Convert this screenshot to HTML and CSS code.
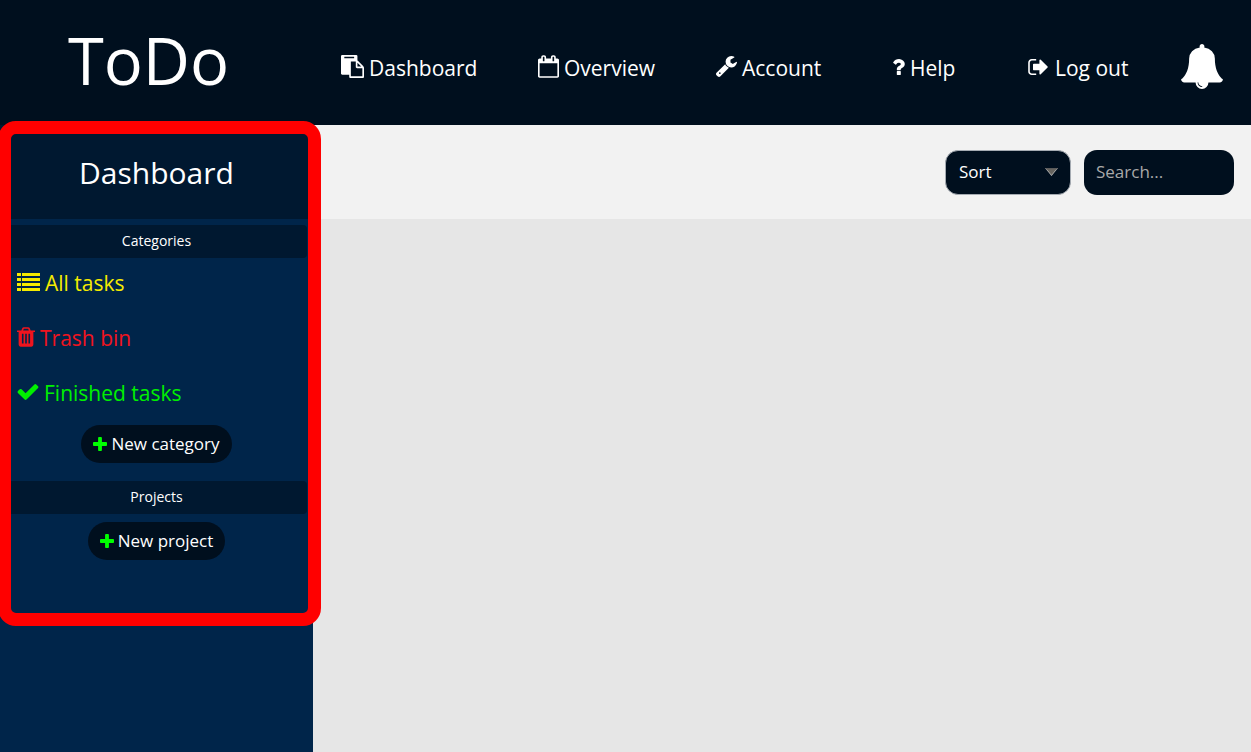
FILE: index.html
```html
<!DOCTYPE html>
<html lang="en">
<head>
<meta charset="utf-8">
<title>ToDo</title>
<link rel="stylesheet" href="styles.css">
</head>
<body>
<div class="app">
  <header class="topbar">
    <div class="logo">ToDo</div>
    <nav class="nav">
      <a class="nav-link" href="#"><svg class="icon-paste" viewBox="0 0 1792 1792"><path d="M768 1664h896v-640h-416q-40 0-68-28t-28-68v-416h-384v1152zm256-1440v-64q0-13-9.500-22.500t-22.500-9.500h-704q-13 0-22.500 9.500t-9.500 22.500v64q0 13 9.500 22.500t22.500 9.500h704q13 0 22.500-9.500t9.500-22.500zm256 672h299l-299-299v299zm512 128v672q0 40-28 68t-68 28h-960q-40 0-68-28t-28-68v-160h-544q-40 0-68-28t-28-68v-1344q0-40 28-68t68-28h1088q40 0 68 28t28 68v328q21 13 36 28l408 408q28 28 48 76t20 88z"/></svg><span>Dashboard</span></a>
      <a class="nav-link" href="#"><svg class="icon-calendar" viewBox="0 0 1664 1792"><path d="M128 1664h1408v-1024h-1408v1024zm384-1216v-288q0-14-9-23t-23-9h-64q-14 0-23 9t-9 23v288q0 14 9 23t23 9h64q14 0 23-9t9-23zm768 0v-288q0-14-9-23t-23-9h-64q-14 0-23 9t-9 23v288q0 14 9 23t23 9h64q14 0 23-9t9-23zm384-64v1280q0 52-38 90t-90 38h-1408q-52 0-90-38t-38-90v-1280q0-52 38-90t90-38h128v-96q0-66 47-113t113-47h64q66 0 113 47t47 113v96h384v-96q0-66 47-113t113-47h64q66 0 113 47t47 113v96h128q52 0 90 38t38 90z"/></svg><span>Overview</span></a>
      <a class="nav-link" href="#"><svg class="icon-wrench" viewBox="85 128 1641 1643"><path d="M448 1472q0-26-19-45t-45-19-45 19-19 45 19 45 45 19 45-19 19-45zm644-420l-682 682q-37 37-90 37-52 0-91-37l-106-108q-38-36-38-90 0-53 38-91l681-681q39 98 114.500 173.500t173.500 114.500zm634-435q0 39-23 106-47 134-164.500 217.500t-258.500 83.500q-185 0-316.500-131.500t-131.500-316.500 131.500-316.500 316.500-131.500q58 0 121.500 16.500t107.500 46.500q16 11 16 28t-16 28l-293 169v224l193 107q5-3 79-48.500t135.500-81 70.500-35.500q15 0 23.500 10t8.500 25z"/></svg><span>Account</span></a>
      <a class="nav-link" href="#"><svg class="icon-question" viewBox="483 256 921 1280"><path d="M1088 1256v240q0 16-12 28t-28 12h-240q-16 0-28-12t-12-28v-240q0-16 12-28t28-12h240q16 0 28 12t12 28zm316-600q0 54-15.500 101t-35 76.500-55 59.500-57.500 43.500-61 35.500q-41 23-68.500 65t-27.500 67q0 17-12 32.500t-28 15.500h-240q-15 0-25.500-18.500t-10.500-37.500v-45q0-83 65-156.500t143-108.500q59-27 84-56t25-76q0-42-46.500-74t-107.500-32q-65 0-108 29-35 25-107 115-13 16-31 16-12 0-25-8l-164-125q-13-10-15.500-25t5.500-28q160-266 464-266 80 0 161 31t146 83 106 127.500 41 158.500z"/></svg><span>Help</span></a>
      <a class="nav-link nav-link-wide" href="#"><svg class="icon-signout" viewBox="0 256 1568 1280"><path d="M640 1440q0 4 1 20t.5 26.500-3 23.500-10 19.500-20.500 6.500h-320q-119 0-203.500-84.500t-84.500-203.500v-704q0-119 84.500-203.500t203.500-84.500h320q13 0 22.500 9.500t9.500 22.500q0 4 1 20t.5 26.500-3 23.500-10 19.500-20.500 6.500h-320q-66 0-113 47t-47 113v704q0 66 47 113t113 47h312l11.500 1 11.500 3 8 5.500 7 9 2 13.500zm928-544q0 26-19 45l-544 544q-19 19-45 19t-45-19-19-45v-288h-448q-26 0-45-19t-19-45v-384q0-26 19-45t45-19h448v-288q0-26 19-45t45-19 45 19l544 544q19 19 19 45z"/></svg><span>Log out</span></a>
      <button class="bell" type="button" aria-label="Notifications"><svg class="icon-bell" viewBox="64 0 1664 1792"><path d="M912 1696q0-16-16-16-59 0-101.500-42.500t-42.500-101.500q0-16-16-16t-16 16q0 73 51.500 124.500t124.500 51.500q16 0 16-16zm816-288q0 52-38 90t-90 38h-448q0 106-75 181t-181 75-181-75-75-181h-448q-52 0-90-38t-38-90q50-42 91-88t85-119.500 74.500-158.500 50-206 19.500-260q0-152 117-282.500t307-158.500q-8-19-8-39 0-40 28-68t68-28 68 28 28 68q0 20-8 39 190 28 307 158.500t117 282.500q0 139 19.500 260t50 206 74.500 158.500 85 119.500 91 88z"/></svg></button>
    </nav>
  </header>
  <div class="body">
    <aside class="sidebar">
      <h1 class="sidebar-title">Dashboard</h1>
      <h2 class="section-title">Categories</h2>
      <ul class="categories">
        <li><a class="category category-all" href="#"><svg class="icon-list" viewBox="0 0 23 18"><path d="M0 0h4v3H0zM5 0h18v3H5zM0 5h4v3H0zM5 5h18v3H5zM0 10h4v3H0zM5 10h18v3H5zM0 15h4v3H0zM5 15h18v3H5z"/></svg><span>All tasks</span></a></li>
        <li><a class="category category-trash" href="#"><svg class="icon-trash" viewBox="0 128 1408 1536"><path d="M512 1376v-704q0-14-9-23t-23-9h-64q-14 0-23 9t-9 23v704q0 14 9 23t23 9h64q14 0 23-9t9-23zm256 0v-704q0-14-9-23t-23-9h-64q-14 0-23 9t-9 23v704q0 14 9 23t23 9h64q14 0 23-9t9-23zm256 0v-704q0-14-9-23t-23-9h-64q-14 0-23 9t-9 23v704q0 14 9 23t23 9h64q14 0 23-9t9-23zm-544-992h448l-48-117q-7-9-17-11h-317q-10 2-17 11zm928 32v64q0 14-9 23t-23 9h-96v948q0 83-47 143.500t-113 60.500h-832q-66 0-113-58.500t-47-141.500v-952h-96q-14 0-23-9t-9-23v-64q0-14 9-23t23-9h309l70-167q15-37 54-63t79-26h320q40 0 79 26t54 63l70 167h309q14 0 23 9t9 23z"/></svg><span>Trash bin</span></a></li>
        <li><a class="category category-done" href="#"><svg class="icon-check" viewBox="121 334 1550 1188"><path d="M1671 566q0 40-28 68l-724 724-136 136q-28 28-68 28t-68-28l-136-136-362-362q-28-28-28-68t28-68l136-136q28-28 68-28t68 28l294 295 656-657q28-28 68-28t68 28l136 136q28 28 28 68z"/></svg><span>Finished tasks</span></a></li>
      </ul>
      <button class="new-button" type="button"><svg class="icon-plus" viewBox="192 128 1408 1408"><path d="M1600 736v192q0 40-28 68t-68 28h-416v416q0 40-28 68t-68 28h-192q-40 0-68-28t-28-68v-416h-416q-40 0-68-28t-28-68v-192q0-40 28-68t68-28h416v-416q0-40 28-68t68-28h192q40 0 68 28t28 68v416h416q40 0 68 28t28 68z"/></svg><span>New category</span></button>
      <h2 class="section-title section-projects">Projects</h2>
      <button class="new-button" type="button"><svg class="icon-plus" viewBox="192 128 1408 1408"><path d="M1600 736v192q0 40-28 68t-68 28h-416v416q0 40-28 68t-68 28h-192q-40 0-68-28t-28-68v-416h-416q-40 0-68-28t-28-68v-192q0-40 28-68t68-28h416v-416q0-40 28-68t68-28h192q40 0 68 28t28 68v416h416q40 0 68 28t28 68z"/></svg><span>New project</span></button>
      <div class="highlight"></div>
    </aside>
    <main class="content">
      <div class="toolbar">
        <div class="sort">
          <select class="sort-select" aria-label="Sort"><option>Sort</option><option>Name</option><option>Date</option></select>
          <svg class="sort-arrow" viewBox="0 0 13 8"><path d="M0 0h13L6.500 8z" fill="#c8c8c8"/><path d="M0 0h13L12 1.200H1z" fill="#5a5a5a"/><path d="M1.500 1h10L6.500 7z" fill="#66645f"/></svg>
        </div>
        <input class="search" type="text" placeholder="Search..." aria-label="Search">
      </div>
    </main>
  </div>
</div>
</body>
</html>
```
FILE: styles.css
```css
* {
  box-sizing: border-box;
}

body {
  margin: 0;
  color: #fff;
  font-family: "Open Sans", "Noto Sans", sans-serif;
}

a {
  color: inherit;
  text-decoration: none;
}

button,
input,
select {
  border: 0;
  font: inherit;
  color: inherit;
}

svg {
  display: block;
  flex: none;
  fill: currentColor;
}

.app {
  display: flex;
  flex-direction: column;
  min-height: 100vh;
}

.topbar {
  display: flex;
  height: 125px;
  background: #000f1e;
}

.logo {
  flex: none;
  width: 313px;
  padding-right: 16px;
  font-size: 65px;
  line-height: 121px;
  text-align: center;
}

.nav {
  flex: 1;
  display: grid;
  grid-template-columns: 197fr 178fr 177fr 135fr 153fr 42fr;
  align-items: center;
  padding: 8px 28px 0;
}

.nav-link {
  display: flex;
  align-items: center;
  gap: 5px;
  font-size: 21px;
  line-height: 32px;
  white-space: nowrap;
}

.nav-link span,
.category span {
  padding-top: 2px;
}

.nav-link-wide {
  gap: 7px;
}

.icon-paste {
  width: 23px;
  height: 23px;
}

.icon-calendar {
  width: 21px;
  height: 23px;
}

.icon-wrench {
  width: 21px;
  height: 21px;
}

.icon-question {
  width: 12px;
  height: 16px;
}

.icon-signout {
  width: 20px;
  height: 16px;
}

.icon-bell {
  width: 42px;
  height: 45px;
}

.bell {
  padding: 0;
  background: none;
}

.body {
  flex: 1;
  display: flex;
}

.sidebar {
  position: relative;
  flex: none;
  width: 313px;
  background: #00254a;
  text-align: center;
}

.sidebar-title {
  margin: 0 0 6px;
  height: 94px;
  background: #001830;
  font-size: 30px;
  font-weight: 400;
  line-height: 96px;
}

.section-title {
  margin: 0 6px;
  padding-bottom: 2px;
  border-radius: 4px;
  background: #001830;
  font-size: 14px;
  font-weight: 400;
  line-height: 31px;
}

.categories {
  margin: 0;
  padding: 0 17px 2px;
  list-style: none;
}

.category {
  display: flex;
  align-items: center;
  gap: 5px;
  height: 48px;
  margin-bottom: 7px;
  font-size: 21px;
  line-height: 32px;
}

.category-all {
  color: #f5eb00;
}

.category-trash {
  color: #f0141e;
}

.category-done {
  color: #00f000;
}

.icon-list {
  width: 23px;
  height: 18px;
}

.icon-trash {
  width: 18px;
  height: 20px;
}

.icon-check {
  width: 22px;
  height: 16px;
}

.new-button {
  display: inline-flex;
  align-items: center;
  gap: 4px;
  height: 38px;
  padding: 0 12px 1px;
  border-radius: 19px;
  background: #000f1e;
  font-size: 17px;
}

.icon-plus {
  width: 14px;
  height: 14px;
  color: #0f0;
}

.section-projects {
  margin: 18px 6px 8px;
}

.highlight {
  position: absolute;
  top: -4px;
  left: -2px;
  width: 323px;
  height: 505px;
  border: 13px solid #f00;
  border-radius: 18px;
  pointer-events: none;
}

.content {
  flex: 1;
  background: #e6e6e6;
}

.toolbar {
  display: flex;
  justify-content: flex-end;
  align-items: center;
  gap: 13px;
  height: 94px;
  padding: 0 17px;
  background: #f2f2f2;
}

.sort {
  display: grid;
  align-items: center;
  width: 126px;
}

.sort-select {
  grid-area: 1 / 1;
  appearance: none;
  width: 100%;
  height: 45px;
  padding: 0 13px 1px;
  border: 1px solid #a5abb2;
  border-radius: 13px;
  background: #000f1e;
  font-size: 17px;
}

.sort-arrow {
  grid-area: 1 / 1;
  justify-self: end;
  width: 13px;
  height: 8px;
  margin-right: 13px;
  pointer-events: none;
}

.search {
  width: 150px;
  height: 45px;
  padding: 0 12px 1px;
  border-radius: 13px;
  background: #000f1e;
  font-size: 17px;
}

.search::placeholder {
  color: #a9a9a9;
}
```
